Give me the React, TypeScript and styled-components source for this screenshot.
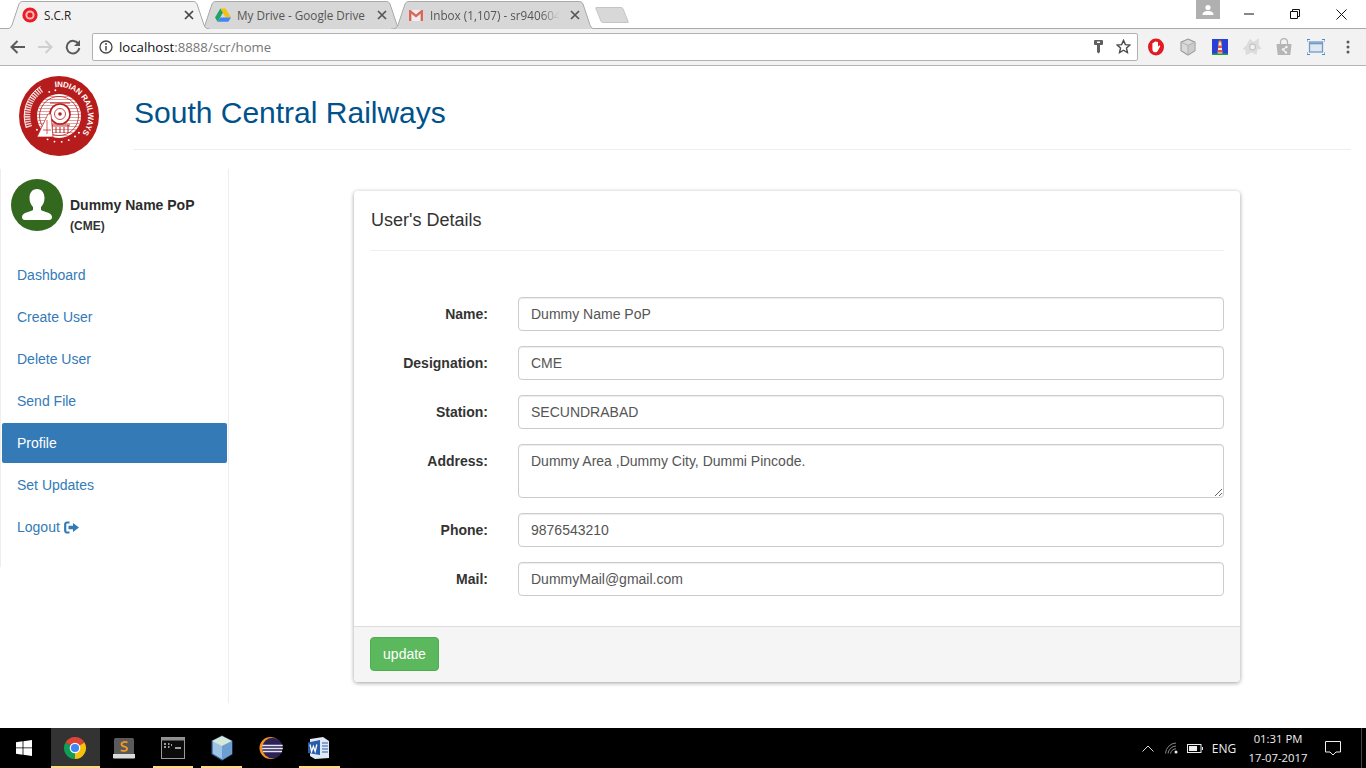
import React from "react";
import styled, { createGlobalStyle } from "styled-components";

const Global = createGlobalStyle`
  html, body { margin: 0; padding: 0; height: 100%; background: #fff; overflow: hidden; }
  * { box-sizing: border-box; }
  body { font-family: "Liberation Sans", Arial, sans-serif; font-size: 14px; color: #333; line-height: 20px; }
`;

const Screen = styled.div`
  width: 1366px; height: 768px; display: flex; flex-direction: column; overflow: hidden;
`;

/* ---------- browser chrome ---------- */
const TabStrip = styled.div`
  height: 29px; display: flex; align-items: flex-end; padding-left: 5px; background: #fff;
  border-bottom: 1px solid #a9a9a9; flex: none;
`;
const Tab = styled.div<{ $active?: boolean }>`
  position: relative; width: 205px; height: 28px; margin-right: -12px; margin-bottom: -1px;
  z-index: ${p => (p.$active ? 3 : 1)}; display: flex; align-items: center; padding: 0 19px 0 17px;
  font-family: "Open Sans", sans-serif; font-size: 11.7px; color: ${p => (p.$active ? "#222" : "#555")};
`;
const TabShape = styled.svg`
  position: absolute; left: 0; top: 0; width: 100%; height: 100%; z-index: -1;
`;
const Favicon = styled.span`
  width: 16px; height: 16px; flex: none; display: flex; margin-right: 6px;
`;
const TabTitle = styled.span<{ $fade?: boolean }>`
  flex: 1; min-width: 0; white-space: nowrap; overflow: hidden; line-height: 16px;
  ${p => p.$fade && "mask-image: linear-gradient(to right, #000 84%, transparent 98%);"}
`;
const TabClose = styled.svg`
  width: 10px; height: 10px; flex: none; margin-left: 8px; margin-right: -3px;
`;
const NewTab = styled.div`
  width: 28px; height: 16px; margin-left: 14px; margin-bottom: 5px; background: #d8d8d8; border: 1px solid #c4c4c4;
  border-radius: 2px; transform: skewX(22deg); flex: none;
`;
const WindowControls = styled.div`
  margin-left: auto; align-self: flex-start; display: flex; height: 20px; padding-right: 2px;
`;
const ProfileBadge = styled.div`
  width: 24px; height: 19px; background: #b0b0b0; display: flex; align-items: center; justify-content: center; margin-right: 6px;
`;
const WinButton = styled.div`
  width: 46px; height: 28px; display: flex; align-items: center; justify-content: center;
`;
const Toolbar = styled.div`
  height: 37px; flex: none; background: #f2f2f2; border-bottom: 1px solid #b4b4b4; display: flex; align-items: center; padding: 0 0 1px 4px;
`;
const NavButton = styled.div`
  width: 27.5px; height: 28px; display: flex; align-items: center; justify-content: center; flex: none;
`;
const Omnibox = styled.div`
  width: 1046px; height: 28px; margin-left: 5.5px; background: #fff; border: 1px solid #b2b2b2; border-radius: 2px;
  display: flex; align-items: center; padding: 0 1px 0 6px; flex: none;
`;
const Url = styled.div`
  font-family: "Open Sans", sans-serif; font-size: 13.2px; color: #111; margin-left: 6px; flex: 1; line-height: 20px;
  span { color: #777; }
`;
const OmniIcon = styled.span`
  width: 25px; display: flex; justify-content: center; flex: none;
`;
const Extensions = styled.div`
  display: flex; margin-left: 2px;
`;
const Extension = styled.div`
  width: 32px; height: 28px; display: flex; align-items: center; justify-content: center;
`;

/* ---------- page ---------- */
const Page = styled.div`
  flex: 1; min-height: 0; display: flex; flex-direction: column; background: #fff;
`;
const Header = styled.header`
  display: flex; height: 84px; padding-left: 19px; margin-bottom: 19px; flex: none;
`;
const LogoWrap = styled.div`
  width: 81px; padding-top: 10px; flex: none;
`;
const TitleBlock = styled.div`
  flex: 1; margin: 0 15px 0 33px; padding-top: 30px; border-bottom: 1px solid #eee;
`;
const Title = styled.h1`
  margin: 0 0 0 1px; font-size: 30px; line-height: 33px; font-weight: 400; color: #00528c;
`;
const Body = styled.div`
  display: flex; align-items: flex-start; flex: 1;
`;
const Sidebar = styled.aside`
  width: 229px; height: 534px; border-right: 1px solid #eee; flex: none;
`;
const SideInner = styled.div`
  height: 398px; border-left: 1px solid #eee; padding-left: 1px;
`;
const UserBlock = styled.div`
  display: flex; padding: 10px 0 0 9px; height: 86px;
`;
const Avatar = styled.div`
  width: 52px; height: 52px; border-radius: 50%; background: #33691e; flex: none; display: flex;
`;
const UserText = styled.div`
  margin-left: 7px; padding-top: 16px; font-weight: 700; color: #333;
`;
const UserName = styled.div`
  font-size: 14px; line-height: 20px; color: #2b2b2b;
`;
const UserRole = styled.div`
  font-size: 12px; line-height: 20px; margin-top: 1px;
`;
const Nav = styled.nav`
  display: flex; flex-direction: column; gap: 2px; width: 225px;
`;
const NavItem = styled.a<{ $active?: boolean }>`
  display: flex; align-items: center; gap: 4px; height: 40px; padding: 0 15px; border-radius: 2px; font-size: 14px;
  color: ${p => (p.$active ? "#fff" : "#337ab7")}; background: ${p => (p.$active ? "#337ab7" : "transparent")};
`;
const Card = styled.section`
  width: 886px; height: 491px; margin: 22px 0 0 125px; background: #fff; border-radius: 4px;
  box-shadow: 0 1px 4px rgba(0,0,0,.38); display: flex; flex-direction: column; overflow: hidden; flex: none;
`;
const CardTitle = styled.h3`
  margin: 0 16px 0 17px; height: 60px; border-bottom: 1px solid #eee; font-size: 18px; line-height: 20px;
  font-weight: 400; padding-top: 19px; color: #333; flex: none;
`;
const Form = styled.form`
  flex: 1; display: flex; flex-direction: column; gap: 15px; padding: 46px 16px 0 17px;
`;
const Row = styled.div`
  display: grid; grid-template-columns: 117px 706px; column-gap: 30px;
`;
const Label = styled.label`
  text-align: right; font-weight: 700; padding-top: 7px; line-height: 20px; color: #333;
`;
const fieldStyle = `
  display: block; width: 100%; border: 1px solid #ccc; border-radius: 4px; padding: 6px 12px; color: #555;
  font: 14px/20px "Liberation Sans", Arial, sans-serif; background: #fff; box-shadow: inset 0 1px 1px rgba(0,0,0,.075); outline: none;
`;
const Input = styled.input`
  ${fieldStyle} height: 34px;
`;
const TextArea = styled.textarea`
  ${fieldStyle} height: 54px; resize: vertical; margin: 0;
`;
const CardFooter = styled.div`
  height: 56px; flex: none; background: #f5f5f5; border-top: 1px solid #ddd; padding: 10px 16px;
`;
const UpdateButton = styled.button`
  width: 69px; height: 34px; background: #5cb85c; border: 1px solid #4cae4c; border-radius: 4px; color: #fff;
  font: 14px/20px "Liberation Sans", Arial, sans-serif; padding: 0;
`;

/* ---------- taskbar ---------- */
const Taskbar = styled.footer`
  height: 40px; flex: none; background: #000; display: flex; color: #fff; font-family: "Open Sans", sans-serif;
`;
const StartButton = styled.div`
  width: 51px; display: flex; align-items: center; justify-content: center; padding-right: 3px;
`;
const TaskItem = styled.div<{ $open?: boolean; $active?: boolean }>`
  position: relative; width: 48.8px; display: flex; align-items: center; justify-content: center;
  padding-bottom: 1px; background: ${p => (p.$active ? "#333" : "transparent")};
  ${p => p.$open && `&::after { content: ""; position: absolute; bottom: 0; height: 2px; background: #ffd97d;
    left: ${p.$active ? 0 : "4px"}; right: ${p.$active ? 0 : "4px"}; }`}
`;
const Tray = styled.div`
  margin-left: auto; display: flex; align-items: stretch;
`;
const TrayIcon = styled.div<{ $w: number; $small?: boolean }>`
  width: ${p => p.$w}px; display: flex; align-items: center; justify-content: center; font-size: ${p => (p.$small ? "11.3px" : "12px")};
  flex-direction: column; line-height: 19px; color: #eee; white-space: nowrap;
`;
const ShowDesktop = styled.div`
  width: 5px; margin-left: 9px; border-left: 1px solid #444;
`;

/* ---------- drawings ---------- */
const ChromeIcon = ({ size = 24 }: { size?: number }) => (
  <svg width={size} height={size} viewBox="0 0 24 24">
    <path d="M12 12L2.47 6.5A11 11 0 0 1 21.53 6.5Z" fill="#db4437" />
    <path d="M12 12L21.53 6.5A11 11 0 0 1 12 23Z" fill="#f4c20d" />
    <path d="M12 12L12 23A11 11 0 0 1 2.47 6.5Z" fill="#0f9d58" />
    <circle cx="12" cy="12" r="5.3" fill="#fff" />
    <circle cx="12" cy="12" r="4.1" fill="#4285f4" />
  </svg>
);

const Logo = () => {
  const dots = [52, 68, 84, 100, 116, 132, 148, 248, 262, 40];
  const rail = [20, 23, 26, 29, 32, 35, 38, 41, 44, 47, 50, 53, 56, 59];
  return (
    <svg width="80" height="80" viewBox="0 0 80 80">
      <defs>
        <path id="rly" d="M36 11.300A29 29 0 0 1 64 56.300" />
        <clipPath id="wheel"><circle cx="40" cy="40" r="22" /></clipPath>
      </defs>
      <circle cx="40" cy="40" r="40" fill="#b71c1c" />
      <text fontFamily="Liberation Sans, sans-serif" fontWeight="700" fontSize="8" fill="#fff">
        <textPath href="#rly" textLength="68" lengthAdjust="spacing">INDIAN RAILWAYS</textPath>
      </text>
      <path d="M10.300 51A32 32 0 0 1 23 13" fill="none" stroke="#fff" strokeWidth="6" strokeDasharray="1.500 .9" opacity=".8" />
      <path d="M7.300 52A35 35 0 0 1 21.500 10.500" fill="none" stroke="#fff" strokeWidth=".9" />
      {dots.map(a => (
        <circle key={a} cx={40 + 26 * Math.cos((a * Math.PI) / 180)} cy={40 + 26 * Math.sin((a * Math.PI) / 180)} r=".95" fill="#fff" />
      ))}
      <circle cx="40" cy="40" r="22" fill="#fff" />
      <g clipPath="url(#wheel)">
        {rail.map(y => <rect key={y} x="16" y={y} width="48" height=".8" fill="#d98a8a" />)}
      </g>
      <circle cx="40" cy="40" r="19.500" fill="none" stroke="#b71c1c" strokeWidth=".8" />
      <circle cx="41" cy="38" r="10" fill="#fff" stroke="#b71c1c" strokeWidth="1.600" />
      <circle cx="41" cy="38" r="5.500" fill="#fff" stroke="#b71c1c" strokeWidth=".8" />
      <circle cx="41" cy="38" r="1.800" fill="#b71c1c" />
      <path d="M31 27h20M31 49h20M33 49v8M49 49v8M37 51v6M41 51v6M45 51v6" stroke="#b71c1c" strokeWidth="1" fill="none" />
      <path d="M18 61L29 38L32 38L34 61Z" fill="#fff" stroke="#b71c1c" strokeWidth=".7" />
      <path d="M28 44v14M24 54h8" stroke="#b71c1c" strokeWidth=".7" />
    </svg>
  );
};

const tabPath = "M0 28C4 28 6 27 7 24L14 3C15 1 16 0.5 19 0.5L187 0.5C190 0.5 191 1 192 3L199 24C200 27 202 28 205 28";
const TabBg = ({ active }: { active?: boolean }) => (
  <TabShape viewBox="0 0 205 28" preserveAspectRatio="none">
    <path d={tabPath} fill={active ? "#f2f2f2" : "#d7d7d7"} stroke="#a9a9a9" strokeWidth="1" />
  </TabShape>
);
const CloseX = ({ color = "#555" }: { color?: string }) => (
  <TabClose viewBox="0 0 10 10"><path d="M1 1L9 9M9 1L1 9" stroke={color} strokeWidth="1.7" /></TabClose>
);
const ScrFav = () => (
  <svg width="16" height="16" viewBox="0 0 16 16">
    <circle cx="8" cy="8" r="7.6" fill="#ec1c24" />
    <circle cx="8" cy="8" r="4.6" fill="#f6b8ba" />
    <circle cx="8" cy="8" r="2.6" fill="#ec1c24" />
  </svg>
);
const DriveFav = () => (
  <svg width="16" height="16" viewBox="0 0 16 16">
    <path d="M5.3 1.5h5.2L16 10.6h-5.2z" fill="#f4c20d" />
    <path d="M5.3 1.5L0 10.6l2.6 4.2 5.3-9z" fill="#1fa463" />
    <path d="M2.6 14.8h10.7L16 10.6H5.3z" fill="#4285f4" />
  </svg>
);
const GmailFav = () => (
  <svg width="16" height="16" viewBox="0 0 16 16">
    <path d="M1 3h14v11H1z" fill="#efeeee" />
    <path d="M1 14V3h1.6L8 7.4 13.4 3H15v11h-2.4V6.8L8 10.4 3.4 6.8V14z" fill="#d9675c" />
  </svg>
);

const ExtOpera = () => (
  <svg width="18" height="18" viewBox="0 0 18 18">
    <ellipse cx="9" cy="9" rx="8" ry="8.4" fill="#e01b22" />
    <path d="M5.400 9.500V5.600c0-1 1.300-1 1.300 0V4.400c0-1 1.400-1 1.400 0V4c0-1 1.500-1 1.500 0v.6c0-1 1.400-1 1.400 0v4.200l.9-1c.8-.7 1.700.1 1.100 1l-2.200 4c-.6 1-1.200 1.500-2.400 1.500H8c-1.500 0-2.600-1.200-2.600-3z" fill="#fff" />
  </svg>
);
const ExtBox = () => (
  <svg width="18" height="18" viewBox="0 0 18 18">
    <path d="M9 1l7 3.200v8.600L9 17l-7-4.200V4.200z" fill="#d9d9d9" stroke="#9a9a9a" strokeWidth="1.100" />
    <path d="M9 7.400l7-3.200v8.600L9 17z" fill="#bdbdbd" opacity=".5" />
    <path d="M9 7.400L2 4.200M9 7.400l7-3.200M9 7.400V17" stroke="#b0b0b0" strokeWidth="1" fill="none" />
  </svg>
);
const ExtLighthouse = () => (
  <svg width="16" height="16" viewBox="0 0 16 16">
    <rect width="16" height="16" fill="#2a3fd6" />
    <path d="M0 14.500h16V16H0z" fill="#1ca23d" />
    <path d="M6.600 4h2.800l1 10.500H5.600z" fill="#f4f0c8" />
    <path d="M6.300 6.500h3.400l.3 2.500H6zM5.800 11h4.400l.3 2.500H5.500z" fill="#e8503a" />
    <path d="M6.600 2.200h2.800V4H6.600z" fill="#f6c83a" />
    <path d="M8 .6L9.600 2.200H6.400z" fill="#e8503a" />
  </svg>
);
const ExtAvast = () => (
  <svg width="20" height="20" viewBox="0 0 18 18">
    <path d="M7 1.500l3.500 3L15.500 1l-.5 6 2.500 3.500-3.500.8-1 5-4-2.300-5.500 2.500L3 12 .5 10.500 4 7.500z" fill="#dcdcdc" />
    <circle cx="9.500" cy="9" r="2.600" fill="#f2f2f2" stroke="#c4c4c4" strokeWidth="1" />
  </svg>
);
const ExtBag = () => (
  <svg width="18" height="18" viewBox="0 0 18 18">
    <path d="M1.500 6h15l-1.200 11H2.700z" fill="#b5b5b5" />
    <path d="M5.500 7V4a3.500 3.500 0 0 1 7 0v3" fill="none" stroke="#b5b5b5" strokeWidth="1.300" />
    <path d="M11.500 9L8 11.500l3 3" stroke="#f2f2f2" strokeWidth="1.200" fill="none" />
    <circle cx="11.500" cy="9" r="1.200" fill="#f2f2f2" /><circle cx="8" cy="11.500" r="1.200" fill="#f2f2f2" /><circle cx="11" cy="14.500" r="1.200" fill="#f2f2f2" />
  </svg>
);
const ExtScreen = () => (
  <svg width="18" height="16" viewBox="0 0 18 16">
    <rect x="2.500" y="3" width="13" height="10" fill="#dfe8f1" stroke="#6e9cc6" strokeWidth="1.300" />
    <path d="M2.500 4.500h13" stroke="#6e9cc6" strokeWidth="1.600" />
    <path d="M0 3V.5h3M15 .5h3V3M0 13v2.500h3M15 15.500h3V13" fill="none" stroke="#4f8bc0" strokeWidth="1" />
  </svg>
);

const TaskSublime = () => (
  <svg width="24" height="24" viewBox="0 0 24 24">
    <path d="M2 3.500A1.500 1.500 0 0 1 3.500 2h17A1.500 1.500 0 0 1 22 3.500V18H2z" fill="#5a5a5a" />
    <path d="M1 18h22v3.500a1 1 0 0 1-1 1H2a1 1 0 0 1-1-1z" fill="#dcdcdc" />
    <path d="M15.500 6.500c-2-1-6-.6-6 1.800 0 3 5.600 1.800 5.600 4.500 0 2.400-4 2.600-6.300 1.400" fill="none" stroke="#f39a21" strokeWidth="1.800" />
  </svg>
);
const TaskCmd = () => (
  <svg width="24" height="22" viewBox="0 0 24 22">
    <rect x=".5" y=".5" width="23" height="21" fill="#0c0c0c" stroke="#9a9a9a" />
    <path d="M.5.5h23v3H.5z" fill="#8f8f8f" />
    <path d="M3 7h2M3 10h2M7 7h1.500M7 10h1.500M10 8h1M14 11h6" stroke="#d0d0d0" strokeWidth="1.300" />
  </svg>
);
const TaskBox = () => (
  <svg width="24" height="26" viewBox="0 0 24 26">
    <path d="M12 1l10 5v13l-10 6-10-6V6z" fill="#9ec3e4" stroke="#2b4f88" strokeWidth="1.200" />
    <path d="M12 1l10 5-10 5L2 6z" fill="#d6e9d8" />
    <path d="M12 11v14l10-6V6z" fill="#6d9ed0" />
  </svg>
);
const TaskEclipse = () => (
  <svg width="24" height="24" viewBox="0 0 24 24">
    <circle cx="11.500" cy="12" r="11" fill="#f7941e" />
    <circle cx="13.500" cy="12" r="10.300" fill="#2c2255" />
    <path d="M3.300 9.500h20.400M3.200 12.500h20.600M4 15.500h19" stroke="#e8e6f3" strokeWidth="1.300" />
  </svg>
);
const TaskWord = () => (
  <svg width="24" height="24" viewBox="0 0 24 24">
    <path d="M3 3l13-2 6 4v17l-14 1-5-3z" fill="#dfe9f6" />
    <path d="M1 6.500L13 4v15L1 17z" fill="#2a5caa" />
    <path d="M15 7h6M15 10h6M15 13h6M15 16h6" stroke="#2a5caa" strokeWidth="1.200" />
    <path d="M3 8.500l1.600 7 1.800-5 1.800 5 1.600-7" fill="none" stroke="#fff" strokeWidth="1.300" />
  </svg>
);

const fields: { label: string; value: string; area?: boolean }[] = [
  { label: "Name:", value: "Dummy Name PoP" },
  { label: "Designation:", value: "CME" },
  { label: "Station:", value: "SECUNDRABAD" },
  { label: "Address:", value: "Dummy Area ,Dummy City, Dummi Pincode.", area: true },
  { label: "Phone:", value: "9876543210" },
  { label: "Mail:", value: "DummyMail@gmail.com" },
];

const navLinks = ["Dashboard", "Create User", "Delete User", "Send File", "Profile", "Set Updates"];

export default function App() {
  return (
    <Screen>
      <Global />
      <TabStrip>
        <Tab $active>
          <TabBg active />
          <Favicon><ScrFav /></Favicon>
          <TabTitle>S.C.R</TabTitle>
          <CloseX color="#444" />
        </Tab>
        <Tab>
          <TabBg />
          <Favicon><DriveFav /></Favicon>
          <TabTitle>My Drive - Google Drive</TabTitle>
          <CloseX />
        </Tab>
        <Tab>
          <TabBg />
          <Favicon><GmailFav /></Favicon>
          <TabTitle $fade>Inbox (1,107) - sr94060461@gmail.com</TabTitle>
          <CloseX />
        </Tab>
        <NewTab />
        <WindowControls>
          <ProfileBadge>
            <svg width="12" height="12" viewBox="0 0 12 12">
              <circle cx="6" cy="3.500" r="2.600" fill="#fff" />
              <path d="M.5 11c0-3 2-4 5.500-4s5.500 1 5.500 4z" fill="#fff" />
            </svg>
          </ProfileBadge>
          <WinButton><svg width="10" height="2" viewBox="0 0 10 2"><path d="M0 1h10" stroke="#111" strokeWidth="1" /></svg></WinButton>
          <WinButton><svg width="10" height="10" viewBox="0 0 10 10"><path d="M.5 2.500h7v7h-7zM2.500 2.500v-2h7v7h-2" fill="none" stroke="#111" /></svg></WinButton>
          <WinButton><svg width="11" height="11" viewBox="0 0 11 11"><path d="M.5.500l10 10M10.500.500l-10 10" stroke="#111" strokeWidth="1" /></svg></WinButton>
        </WindowControls>
      </TabStrip>
      <Toolbar>
        <NavButton>
          <svg width="16" height="14" viewBox="0 0 16 14"><path d="M15 7H2M7.500 1L1.500 7l6 6" fill="none" stroke="#5a5a5a" strokeWidth="2" /></svg>
        </NavButton>
        <NavButton>
          <svg width="16" height="14" viewBox="0 0 16 14"><path d="M1 7h13M8.500 1l6 6-6 6" fill="none" stroke="#cfcfcf" strokeWidth="2" /></svg>
        </NavButton>
        <NavButton>
          <svg width="16" height="16" viewBox="0 0 16 16"><path d="M13.500 5A6.300 6.300 0 1 0 14.300 9" fill="none" stroke="#5a5a5a" strokeWidth="2" /><path d="M15 1v6H9z" fill="#5a5a5a" /></svg>
        </NavButton>
        <Omnibox>
          <svg width="14" height="14" viewBox="0 0 14 14">
            <circle cx="7" cy="7" r="6" fill="none" stroke="#444" strokeWidth="1.300" />
            <path d="M7 6v4.500" stroke="#444" strokeWidth="1.500" /><circle cx="7" cy="4" r="1" fill="#444" />
          </svg>
          <Url>localhost<span>:8888/scr/home</span></Url>
          <OmniIcon>
            <svg width="11" height="15" viewBox="0 0 11 15">
              <path fillRule="evenodd" d="M1 2a1 1 0 0 1 1-1h7a1 1 0 0 1 1 1v3a1 1 0 0 1-1 1H7v7l-1.500 1.500L4 13V6H2a1 1 0 0 1-1-1zM4 2.500v1.500h3V2.500z" fill="#5f5f5f" />
            </svg>
          </OmniIcon>
          <OmniIcon>
            <svg width="15" height="15" viewBox="0 0 16 16"><path d="M8 1.500l2 4.500 4.800.5-3.600 3.200 1 4.800L8 12l-4.200 2.500 1-4.800L1.200 6.500 6 6z" fill="none" stroke="#4a4a4a" strokeWidth="1.500" /></svg>
          </OmniIcon>
        </Omnibox>
        <Extensions>
          <Extension><ExtOpera /></Extension>
          <Extension><ExtBox /></Extension>
          <Extension><ExtLighthouse /></Extension>
          <Extension><ExtAvast /></Extension>
          <Extension><ExtBag /></Extension>
          <Extension><ExtScreen /></Extension>
          <Extension>
            <svg width="4" height="14" viewBox="0 0 4 14"><circle cx="2" cy="2" r="1.500" fill="#5a5a5a" /><circle cx="2" cy="7" r="1.500" fill="#5a5a5a" /><circle cx="2" cy="12" r="1.500" fill="#5a5a5a" /></svg>
          </Extension>
        </Extensions>
      </Toolbar>

      <Page>
        <Header>
          <LogoWrap><Logo /></LogoWrap>
          <TitleBlock><Title>South Central Railways</Title></TitleBlock>
        </Header>
        <Body>
          <Sidebar>
            <SideInner>
              <UserBlock>
                <Avatar>
                  <svg width="52" height="52" viewBox="0 0 52 52">
                    <path d="M26 10c5 0 7.500 4 7.500 9 0 4-1.500 7-3.500 9v3c3 2 11 2.500 11 7 0 2-1 3-3 3H14c-2 0-3-1-3-3 0-4.500 8-5 11-7v-3c-2-2-3.500-5-3.500-9 0-5 2.500-9 7.500-9z" fill="#fff" />
                  </svg>
                </Avatar>
                <UserText>
                  <UserName>Dummy Name PoP</UserName>
                  <UserRole>(CME)</UserRole>
                </UserText>
              </UserBlock>
              <Nav>
                {navLinks.map(l => (
                  <NavItem key={l} $active={l === "Profile"}>{l}</NavItem>
                ))}
                <NavItem>
                  Logout
                  <svg width="15" height="13" viewBox="0 0 15 13">
                    <path d="M5.500 1.500H3A1.800 1.800 0 0 0 1.200 3.300v6.400A1.800 1.800 0 0 0 3 11.500h2.500" fill="none" stroke="#337ab7" strokeWidth="2.200" />
                    <path d="M4.500 4.800h4.500V2l6 4.500-6 4.500V8.200H4.500z" fill="#337ab7" />
                  </svg>
                </NavItem>
              </Nav>
            </SideInner>
          </Sidebar>
          <Card>
            <CardTitle>User's Details</CardTitle>
            <Form>
              {fields.map(f => (
                <Row key={f.label}>
                  <Label>{f.label}</Label>
                  {f.area ? <TextArea defaultValue={f.value} /> : <Input defaultValue={f.value} />}
                </Row>
              ))}
            </Form>
            <CardFooter><UpdateButton type="button">update</UpdateButton></CardFooter>
          </Card>
        </Body>
      </Page>

      <Taskbar>
        <StartButton>
          <svg width="16" height="16" viewBox="0 0 16 16"><path d="M0 2.300L6.600 1.300V7.500H0zM7.400 1.200L16 0V7.500H7.400zM0 8.300H6.600V14.700L0 13.700zM7.400 8.300H16V16L7.400 14.800z" fill="#fff" /></svg>
        </StartButton>
        <TaskItem $open $active><ChromeIcon /></TaskItem>
        <TaskItem><TaskSublime /></TaskItem>
        <TaskItem $open><TaskCmd /></TaskItem>
        <TaskItem $open><TaskBox /></TaskItem>
        <TaskItem><TaskEclipse /></TaskItem>
        <TaskItem $open><TaskWord /></TaskItem>
        <Tray>
          <TrayIcon $w={25}><svg width="12" height="7" viewBox="0 0 12 7"><path d="M.5 6.500L6 1l5.500 5.500" fill="none" stroke="#ddd" strokeWidth="1" /></svg></TrayIcon>
          <TrayIcon $w={24}><svg width="14" height="12" viewBox="0 0 14 12"><path d="M.5 11.500A11 11 0 0 1 11 1M3 11.500A8.500 8.500 0 0 1 11 4M5.500 11.500A6 6 0 0 1 11 6.800" fill="none" stroke="#888" strokeWidth="1" /><circle cx="11" cy="10" r="1.500" fill="#eee" /></svg></TrayIcon>
          <TrayIcon $w={22}><svg width="16" height="9" viewBox="0 0 16 9"><rect x=".5" y=".5" width="13.500" height="8" fill="none" stroke="#eee" /><rect x="2" y="2" width="8" height="5" fill="#eee" /><path d="M15 3h1v3h-1z" fill="#eee" /></svg></TrayIcon>
          <TrayIcon $w={36}>ENG</TrayIcon>
          <TrayIcon $w={72} $small><span>01:31 PM</span><span>17-07-2017</span></TrayIcon>
          <TrayIcon $w={38}><svg width="16" height="15" viewBox="0 0 16 15"><path d="M.5.500h15v10.500h-4.500l-3 3-3-3H.5z" fill="none" stroke="#eee" /></svg></TrayIcon>
          <ShowDesktop />
        </Tray>
      </Taskbar>
    </Screen>
  );
}
